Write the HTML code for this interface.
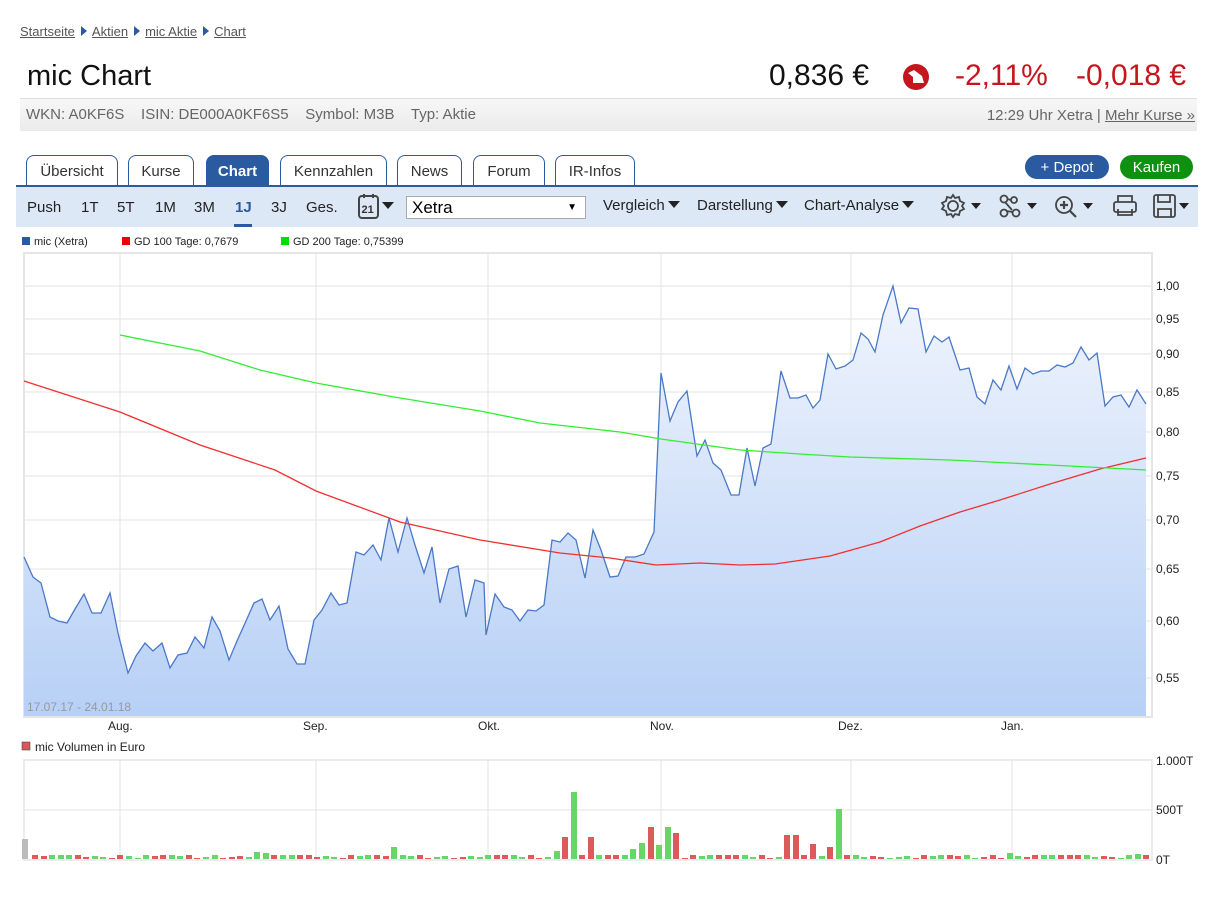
<!DOCTYPE html>
<html><head><meta charset="utf-8"><style>
body{margin:0;width:1217px;height:901px;background:#fff;font-family:"Liberation Sans",sans-serif;position:relative;overflow:hidden}
.a{position:absolute}
.bc{left:20px;top:24px;font-size:13px;color:#555}
.bc a{color:#555;text-decoration:underline}
.bc .t{display:inline-block;width:0;height:0;border-left:6px solid #2a5aa0;border-top:5px solid transparent;border-bottom:5px solid transparent;margin:0 5px 0 6px}
.tab{position:absolute;top:155px;height:30px;border:1px solid #2a5aa0;border-bottom:none;border-radius:8px 8px 0 0;background:#fff;font-size:15px;color:#333;text-align:center;line-height:32px;box-sizing:border-box}
.tb{position:absolute;top:199px;font-size:15px;color:#222}
.dd:after{content:"";display:inline-block;border-top:7px solid #222;border-left:6px solid transparent;border-right:6px solid transparent;margin-left:3px;vertical-align:2px}
</style></head><body>
<div class="a bc"><a>Startseite</a><span class="t"></span><a>Aktien</a><span class="t"></span><a>mic Aktie</a><span class="t"></span><a>Chart</a></div>
<div class="a" style="left:27px;top:60px;font-size:29px;color:#111">mic Chart</div>
<div class="a" style="left:769px;top:59px;font-size:30px;color:#111">0,836 €</div>
<svg class="a" style="left:901px;top:63px" width="30" height="28" viewBox="0 0 30 28"><circle cx="15" cy="14" r="13" fill="#c4161c"/><path d="M7 10 L13 7 L21 13 L23 20 L12 20 L12 14 Z" fill="#fff"/></svg>
<div class="a" style="left:955px;top:59px;font-size:30px;color:#c4161c">-2,11%</div>
<div class="a" style="left:1076px;top:59px;font-size:30px;color:#c4161c">-0,018 €</div>
<div class="a" style="left:20px;top:98px;width:1177px;height:32px;background:linear-gradient(#f7f7f7,#ebebeb);border-top:1px solid #ddd"></div>
<div class="a" style="left:26px;top:106px;font-size:15px;color:#666">WKN: A0KF6S &nbsp;&nbsp; ISIN: DE000A0KF6S5 &nbsp;&nbsp; Symbol: M3B &nbsp;&nbsp; Typ: Aktie</div>
<div class="a" style="right:22px;top:107px;font-size:15px;color:#666">12:29 Uhr Xetra | <span style="text-decoration:underline">Mehr Kurse »</span></div>

<div class="tab" style="left:26px;width:92px">Übersicht</div>
<div class="tab" style="left:128px;width:66px">Kurse</div>
<div class="tab" style="left:206px;width:63px;background:#2a5aa0;color:#fff;font-weight:bold">Chart</div>
<div class="tab" style="left:280px;width:107px">Kennzahlen</div>
<div class="tab" style="left:397px;width:65px">News</div>
<div class="tab" style="left:473px;width:72px">Forum</div>
<div class="tab" style="left:555px;width:80px">IR-Infos</div>
<div class="a" style="left:1025px;top:155px;width:84px;height:24px;border-radius:12px;background:#2a5aa0;color:#fff;font-size:15px;text-align:center;line-height:25px">+ Depot</div>
<div class="a" style="left:1120px;top:155px;width:73px;height:24px;border-radius:12px;background:#109010;color:#fff;font-size:15px;text-align:center;line-height:25px">Kaufen</div>

<div class="a" style="left:16px;top:185px;width:1182px;height:42px;background:#dde8f7;border-top:2px solid #2a5aa0;box-sizing:border-box"></div>
<div class="tb" style="left:27px">Push</div><div class="tb" style="left:81px">1T</div><div class="tb" style="left:117px">5T</div><div class="tb" style="left:155px">1M</div><div class="tb" style="left:194px">3M</div>
<div class="tb" style="left:235px;color:#2a5aa0;font-weight:bold">1J</div><div class="a" style="left:234px;top:224px;width:18px;height:3px;background:#2a5aa0"></div>
<div class="tb" style="left:271px">3J</div><div class="tb" style="left:306px">Ges.</div>
<svg class="a" style="left:357px;top:192px" width="40" height="30"><rect x="2" y="4" width="19" height="22" rx="3" fill="none" stroke="#444" stroke-width="2"/><path d="M7 2v4M16 2v4" stroke="#444" stroke-width="2"/><text x="4.5" y="21" font-size="11" font-weight="bold" fill="#333" font-family="Liberation Sans">21</text><path d="M25 10 L37 10 L31 17 Z" fill="#222"/></svg>
<div class="a" style="left:406px;top:196px;width:180px;height:23px;border:1px solid #aaa;background:#fff;font-size:17px;line-height:22px;padding-left:5px;box-sizing:border-box">Xetra<span style="position:absolute;right:8px;font-size:10px">▼</span></div>
<div class="tb dd" style="left:603px;top:197px">Vergleich</div><div class="tb dd" style="left:697px;top:197px">Darstellung</div><div class="tb dd" style="left:804px;top:197px">Chart-Analyse</div>
<svg class="a" style="left:940px;top:192px" width="260" height="30" fill="none" stroke="#444" stroke-width="1.8">
<circle cx="13" cy="14" r="5"/><path d="M13 3 L15 6 L19 5 L20 9 L24 11 L22 14 L24 17 L20 19 L19 23 L15 22 L13 25 L11 22 L7 23 L6 19 L2 17 L4 14 L2 11 L6 9 L7 5 L11 6 Z"/>
<path d="M31 11 h10 l-5 6z" fill="#222" stroke="none"/>
<circle cx="64" cy="7" r="3.5"/><circle cx="74" cy="8" r="3"/><circle cx="64" cy="21" r="3.5"/><circle cx="76" cy="21" r="3.5"/><path d="M65 10 L72 18 M66 19 L73 20 M67 7 L71 8"/>
<path d="M87 11 h10 l-5 6z" fill="#222" stroke="none"/>
<circle cx="124" cy="13" r="8"/><path d="M130 19 L136 25 M120 13 h8 M124 9 v8" stroke-width="2.2"/>
<path d="M143 11 h10 l-5 6z" fill="#222" stroke="none"/>
<rect x="174" y="10" width="22" height="10" rx="2"/><path d="M178 10 V4 h14 v6 M178 17 v6 h14 v-6"/>
<rect x="214" y="3" width="21" height="22" rx="2"/><path d="M218 3 v7 h12 v-7 M218 25 v-8 h13 v8"/>
<path d="M239 11 h10 l-5 6z" fill="#222" stroke="none"/>
</svg>

<svg class="a" style="left:0;top:230px" width="1217" height="650" font-family="Liberation Sans" font-size="11">
<defs><linearGradient id="g" x1="0" y1="0" x2="0" y2="1"><stop offset="0" stop-color="#f1f5fd"/><stop offset="1" stop-color="#b7d0f6"/></linearGradient></defs>
<rect x="22" y="7" width="8" height="8" fill="#2a5aa0"/><text x="34" y="15" fill="#222">mic (Xetra)</text>
<rect x="122" y="7" width="8" height="8" fill="#e00"/><text x="134" y="15" fill="#222">GD 100 Tage: 0,7679</text>
<rect x="281" y="7" width="8" height="8" fill="#0d0"/><text x="293" y="15" fill="#222">GD 200 Tage: 0,75399</text>
<g transform="translate(0,-230)">
<rect x="24" y="253" width="1128" height="464" fill="none" stroke="#e5e5e5" stroke-width="2"/>
<g stroke="#e3e3e3"><path d="M24 286H1152M24 319H1152M24 354H1152M24 392H1152M24 432H1152M24 476H1152M24 520H1152M24 569H1152M24 621H1152M24 678H1152M120 253V717M316 253V717M488 253V717M661 253V717M851 253V717M1012 253V717"/></g>
<polygon id="pf" fill="url(#g)" points=""/>
<polyline id="pl" fill="none" stroke="#4a78c8" stroke-width="1.3" points=""/>
<polyline fill="none" stroke="#f03030" stroke-width="1.3" points="24,381 120,412 200,445 275,470 316,491 400,522 480,540 560,553 610,558 656,565 700,563 740,565 775,564 830,556 880,542 920,526 960,512 1000,500 1050,484 1100,469 1146,458"/>
<polyline fill="none" stroke="#33ee33" stroke-width="1.3" points="120,335 200,351 260,370 316,383 400,398 480,411 540,423 620,432 661,439 740,450 800,454 850,457 950,460 1050,465 1146,470"/>
<g fill="#222" font-size="12"><text x="1156" y="290">1,00</text><text x="1156" y="323">0,95</text><text x="1156" y="358">0,90</text><text x="1156" y="396">0,85</text><text x="1156" y="436">0,80</text><text x="1156" y="480">0,75</text><text x="1156" y="524">0,70</text><text x="1156" y="573">0,65</text><text x="1156" y="625">0,60</text><text x="1156" y="682">0,55</text>
<text x="108" y="730">Aug.</text><text x="303" y="730">Sep.</text><text x="478" y="730">Okt.</text><text x="650" y="730">Nov.</text><text x="838" y="730">Dez.</text><text x="1001" y="730">Jan.</text></g>
<text x="27" y="711" fill="#999" font-size="12">17.07.17 - 24.01.18</text>
<rect x="22" y="742" width="8" height="8" fill="#d65a5a" stroke="#333" stroke-width=".5"/><text x="35" y="751" fill="#222" font-size="12">mic Volumen in Euro</text>
<rect x="24" y="760" width="1128" height="100" fill="none" stroke="#e5e5e5" stroke-width="1.5"/>
<g stroke="#e3e3e3"><path d="M24 810H1152M120 760V860M316 760V860M488 760V860M661 760V860M851 760V860M1012 760V860"/></g>
<g fill="#222" font-size="12"><text x="1156" y="765">1.000T</text><text x="1156" y="814">500T</text><text x="1156" y="864">0T</text></g>
<g id="vb"></g>
</g></svg>
<script>
var p=[[24,557],[33,577],[41,583],[50,617],[58,621],[67,623],[75,609],[84,594],[92,613],[101,613],[110,593],[118,633],[128,673],[136,656],[145,643],[153,651],[162,643],[170,668],[178,655],[187,653],[195,637],[204,648],[212,617],[220,631],[229,660],[237,641],[246,621],[254,603],[262,599],[270,620],[279,606],[288,649],[297,664],[305,664],[314,620],[322,610],[331,593],[339,605],[347,603],[356,552],[364,555],[373,545],[381,560],[389,518],[398,552],[407,518],[415,545],[424,573],[432,547],[440,603],[449,569],[458,566],[466,617],[475,580],[484,583],[486,635],[495,594],[504,607],[512,610],[520,621],[528,610],[536,611],[544,605],[552,540],[560,542],[568,533],[576,540],[585,578],[593,530],[601,550],[610,577],[618,576],[626,557],[635,557],[644,554],[654,532],[661,373],[670,421],[678,402],[687,391],[697,456],[705,440],[713,463],[721,470],[731,495],[739,495],[747,448],[755,486],[763,448],[771,444],[781,371],[790,398],[798,398],[806,395],[813,408],[820,400],[828,354],[836,369],[845,366],[853,360],[861,333],[868,339],[875,352],[883,315],[893,286],[901,323],[909,308],[918,309],[926,352],[934,336],[942,342],[949,337],[960,370],[969,368],[977,397],[985,404],[993,380],[1001,390],[1009,366],[1017,389],[1025,368],[1033,374],[1041,371],[1049,371],[1057,365],[1065,367],[1073,363],[1081,347],[1089,360],[1097,353],[1105,406],[1113,397],[1121,395],[1129,407],[1137,390],[1146,404]];
var s=p.map(function(a){return a.join(',')}).join(' ');
document.getElementById('pl').setAttribute('points',s);
document.getElementById('pf').setAttribute('points','24,716 '+s+' 1146,716');
var big={569:[67,'g'],833:[50,'g'],891:[90,'g'],561:[22,'r'],588:[22,'r'],645:[32,'r'],662:[32,'g'],670:[26,'r'],617:[12,'g'],627:[10,'g'],636:[16,'g'],653:[14,'g'],782:[24,'r'],790:[24,'r'],390:[12,'g'],824:[12,'r'],807:[15,'r'],253:[7,'g'],262:[6,'g'],552:[8,'g'],960:[12,'r'],1005:[6,'g'],1138:[5,'g']};
var h='<rect x="22" y="839" width="6" height="20" fill="#bbb"/>';
for(var x=32;x<1146;x+=8.55){var xi=Math.round(x),k=null;for(var b in big){if(Math.abs(b-xi)<4){k=big[b];}}
var ht=k?k[0]:1+Math.floor(Math.abs(Math.sin(xi*1.7))*4),c=k?(k[1]=='g'?'#66d666':'#dd5a5a'):(Math.sin(xi*0.9)>0?'#66d666':'#dd5a5a');
h+='<rect x="'+xi+'" y="'+(859-ht)+'" width="6" height="'+ht+'" fill="'+c+'"/>';}
document.getElementById('vb').innerHTML=h;
</script>
</body></html>
